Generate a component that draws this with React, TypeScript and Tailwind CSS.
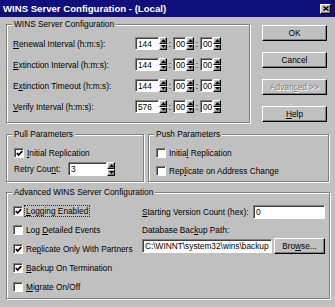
import type { ReactNode } from "react";

const sunken =
  "bg-white border border-t-[#808080] border-l-[#808080] border-r-white border-b-white shadow-[inset_1px_1px_0_#404040]";
const raised =
  "bg-[#c0c0c0] border border-t-white border-l-white border-r-black border-b-black shadow-[inset_-1px_-1px_0_#808080]";

function U({ children }: { children: ReactNode }) {
  return <span className="underline underline-offset-[1px]">{children}</span>;
}

function Group({
  title,
  className,
  children,
}: {
  title: string;
  className: string;
  children: ReactNode;
}) {
  return (
    <fieldset
      className={`border border-[#808080] shadow-[1px_1px_0_#fff,inset_1px_1px_0_#fff] ${className}`}
    >
      <legend className="ml-[5px] px-[2px] h-[10px] leading-[10px] bg-[#c0c0c0]">
        {title}
      </legend>
      {children}
    </fieldset>
  );
}

function Arrow({ up }: { up?: boolean }) {
  return (
    <svg width="5" height="3" viewBox="0 0 5 3">
      <path d={up ? "M2.5 0 L5 3 L0 3 Z" : "M0 0 L5 0 L2.5 3 Z"} fill="#000" />
    </svg>
  );
}

function Spin() {
  return (
    <div className="w-[8px] h-full flex flex-col">
      <div className={`flex-1 flex items-center justify-center ${raised}`}>
        <Arrow up />
      </div>
      <div className={`flex-1 flex items-center justify-center ${raised}`}>
        <Arrow />
      </div>
    </div>
  );
}

function Field({ w, value }: { w: string; value: string }) {
  return (
    <div className={`${w} h-full pl-[2px] flex items-center overflow-hidden whitespace-nowrap ${sunken}`}>
      {value}
    </div>
  );
}

function TimeRow({ label, h }: { label: ReactNode; h: string }) {
  return (
    <div className="flex items-center h-[13px]">
      <span className="w-[122px]">{label}</span>
      <Field w="w-[24px]" value={h} />
      <Spin />
      <span className="w-[6px] text-center">:</span>
      <Field w="w-[13px]" value="00" />
      <Spin />
      <span className="w-[6px] text-center">:</span>
      <Field w="w-[13px]" value="00" />
      <Spin />
    </div>
  );
}

function Check({ checked }: { checked?: boolean }) {
  return (
    <div className={`w-[10px] h-[10px] flex items-center justify-center ${sunken} shadow-[inset_1px_1px_0_#000]`}>
      {checked && (
        <svg width="7" height="7" viewBox="0 0 7 7">
          <path d="M0.8 3 L2.6 5 L6.3 1.2" stroke="#000" strokeWidth="1.7" fill="none" />
        </svg>
      )}
    </div>
  );
}

function CheckRow({
  checked,
  focus,
  children,
}: {
  checked?: boolean;
  focus?: boolean;
  children: ReactNode;
}) {
  return (
    <div className="flex items-center h-[12px] gap-[3px]">
      <Check checked={checked} />
      <span className={focus ? "px-[1px] -ml-[1px] outline outline-1 outline-dotted outline-[#333]" : ""}>
        {children}
      </span>
    </div>
  );
}

function Btn({ children, disabled }: { children: ReactNode; disabled?: boolean }) {
  return (
    <div
      className={`h-[16px] flex items-center justify-center ${raised} ${
        disabled ? "text-[#808080] [text-shadow:1px_1px_0_#fff]" : ""
      }`}
    >
      {children}
    </div>
  );
}

export default function App() {
  return (
    <div className="w-[335px] h-[307px] bg-[#c0c0c0] overflow-hidden text-[8.3px] leading-[10px] text-black font-['Liberation_Sans',Arial,sans-serif]">
      <div className="h-[17px] bg-[#10107c] flex items-center pl-[3px] pr-[4px]">
        <span className="flex-1 text-white font-bold text-[9.6px] whitespace-nowrap">
          WINS Server Configuration - (Local)
        </span>
        <div className={`w-[11px] h-[10px] flex items-center justify-center ${raised}`}>
          <svg width="6" height="5" viewBox="0 0 6 5">
            <path d="M0.5 0.5 L5.5 4.5 M5.5 0.5 L0.5 4.5" stroke="#000" strokeWidth="1.4" />
          </svg>
        </div>
      </div>

      <div className="pl-[6px] pt-[2px]">
        <div className="flex">
          <Group title="WINS Server Configuration" className="w-[244px] h-[104px]">
            <div className="pl-[6px] pt-[8px] flex flex-col gap-[8px]">
              <TimeRow label={<><U>R</U>enewal Interval (h:m:s):</>} h="144" />
              <TimeRow label={<><U>E</U>xtinction Interval (h:m:s):</>} h="144" />
              <TimeRow label={<>E<U>x</U>tinction Timeout (h:m:s):</>} h="144" />
              <TimeRow label={<><U>V</U>erify Interval (h:m:s):</>} h="576" />
            </div>
          </Group>
          <div className="ml-[12px] mt-[6px] w-[65px] flex flex-col gap-[11px]">
            <Btn>OK</Btn>
            <Btn>Cancel</Btn>
            <Btn disabled>
              <span>Advan<U>c</U>ed &gt;&gt;</span>
            </Btn>
            <Btn>
              <span><U>H</U>elp</span>
            </Btn>
          </div>
        </div>

        <div className="flex mt-[6px] gap-[4px]">
          <Group title="Pull Parameters" className="w-[138px] h-[53px]">
            <div className="pl-[7px] pt-[8px]">
              <CheckRow checked>
                <U>I</U>nitial Replication
              </CheckRow>
              <div className="flex items-center h-[14px] mt-[3px]">
                <span className="w-[54px]">
                  Retry Cou<U>n</U>t:
                </span>
                <Field w="w-[39px]" value="3" />
                <Spin />
              </div>
            </div>
          </Group>
          <Group title="Push Parameters" className="w-[181px] h-[53px]">
            <div className="pl-[7px] pt-[8px] flex flex-col gap-[6px]">
              <CheckRow>
                Initia<U>l</U> Replication
              </CheckRow>
              <CheckRow>
                Rep<U>l</U>icate on Address Change
              </CheckRow>
            </div>
          </Group>
        </div>

        <Group title="Advanced WINS Server Configuration" className="mt-[5px] w-[324px] h-[112px]">
          <div className="flex pt-[8px]">
            <div className="w-[135px] pl-[6px] flex flex-col gap-[7px]">
              <CheckRow checked focus>
                <U>L</U>ogging Enabled
              </CheckRow>
              <CheckRow>
                Log <U>D</U>etailed Events
              </CheckRow>
              <CheckRow checked>
                Re<U>p</U>licate Only With Partners
              </CheckRow>
              <CheckRow checked>
                <U>B</U>ackup On Termination
              </CheckRow>
              <CheckRow>
                <U>M</U>igrate On/Off
              </CheckRow>
            </div>
            <div className="flex flex-col">
              <div className="flex items-center h-[14px]">
                <span className="w-[111px] whitespace-nowrap">
                  <U>S</U>tarting Version Count (hex):
                </span>
                <Field w="w-[72px]" value="0" />
              </div>
              <div className="flex items-center h-[12px] mt-[5px]">
                Database Bac<U>k</U>up Path:
              </div>
              <div className="flex items-center h-[16px] mt-[2px] gap-[2px]">
                <div className="h-[14px]">
                  <Field w="w-[130px]" value={"C:\\WINNT\\system32\\wins\\backup"} />
                </div>
                <div className="w-[51px]">
                  <Btn>
                    <span>Bro<U>w</U>se...</span>
                  </Btn>
                </div>
              </div>
            </div>
          </div>
        </Group>
      </div>
    </div>
  );
}
